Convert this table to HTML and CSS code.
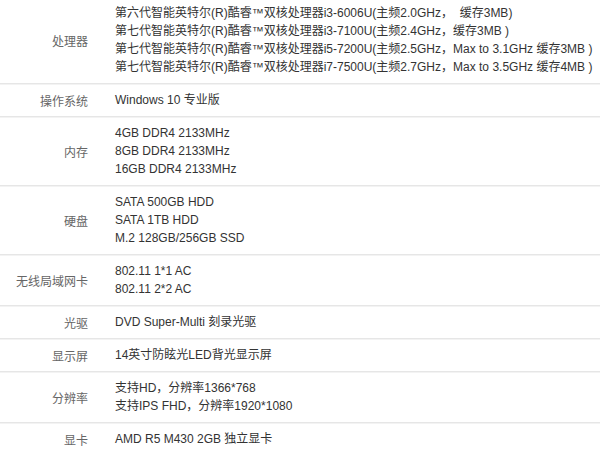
FILE: index.html
```html
<!DOCTYPE html>
<html lang="zh-CN">
<head>
<meta charset="utf-8">
<title>配置参数</title>
<link rel="stylesheet" href="styles.css">
</head>
<body>
<div class="specs">
  <div class="row first">
    <div class="label">处理器</div>
    <div class="value">
      <div>第六代智能英特尔(R)酷睿™双核处理器i3-6006U(主频2.0GHz，&nbsp;&nbsp;缓存3MB)</div>
      <div>第七代智能英特尔(R)酷睿™双核处理器i3-7100U(主频2.4GHz，缓存3MB )</div>
      <div>第七代智能英特尔(R)酷睿™双核处理器i5-7200U(主频2.5GHz，Max to 3.1GHz 缓存3MB )</div>
      <div>第七代智能英特尔(R)酷睿™双核处理器i7-7500U(主频2.7GHz，Max to 3.5GHz 缓存4MB )</div>
    </div>
  </div>
  <div class="row">
    <div class="label">操作系统</div>
    <div class="value"><div>Windows 10 专业版</div></div>
  </div>
  <div class="row">
    <div class="label">内存</div>
    <div class="value">
      <div>4GB DDR4 2133MHz</div>
      <div>8GB DDR4 2133MHz</div>
      <div>16GB DDR4 2133MHz</div>
    </div>
  </div>
  <div class="row">
    <div class="label">硬盘</div>
    <div class="value">
      <div>SATA 500GB HDD</div>
      <div>SATA 1TB HDD</div>
      <div>M.2 128GB/256GB SSD</div>
    </div>
  </div>
  <div class="row">
    <div class="label">无线局域网卡</div>
    <div class="value">
      <div>802.11 1*1 AC</div>
      <div>802.11 2*2 AC</div>
    </div>
  </div>
  <div class="row">
    <div class="label">光驱</div>
    <div class="value"><div>DVD Super-Multi 刻录光驱</div></div>
  </div>
  <div class="row">
    <div class="label">显示屏</div>
    <div class="value"><div>14英寸防眩光LED背光显示屏</div></div>
  </div>
  <div class="row">
    <div class="label">分辨率</div>
    <div class="value">
      <div>支持HD，分辨率1366*768</div>
      <div>支持IPS FHD，分辨率1920*1080</div>
    </div>
  </div>
  <div class="row">
    <div class="label">显卡</div>
    <div class="value"><div>AMD R5 M430 2GB 独立显卡</div></div>
  </div>
</div>
</body>
</html>
```
FILE: styles.css
```css
html, body {
  margin: 0;
  padding: 0;
  background: #fff;
}
body {
  font-family: "Liberation Sans", Arial, "Noto Sans CJK SC", sans-serif;
  font-size: 12px;
  color: #333;
  overflow: hidden;
}
.specs {
  margin-top: -3px;
}
.row {
  display: grid;
  grid-template-columns: 88px 1fr;
  column-gap: 27px;
  align-items: center;
  padding: 7px 0;
  border-bottom: 1px solid #e6e6e6;
  box-shadow: 0 1px 0 #f3f3f3;
}
.label {
  text-align: right;
  color: #666;
}
.value div {
  line-height: 18px;
  white-space: nowrap;
}
```
